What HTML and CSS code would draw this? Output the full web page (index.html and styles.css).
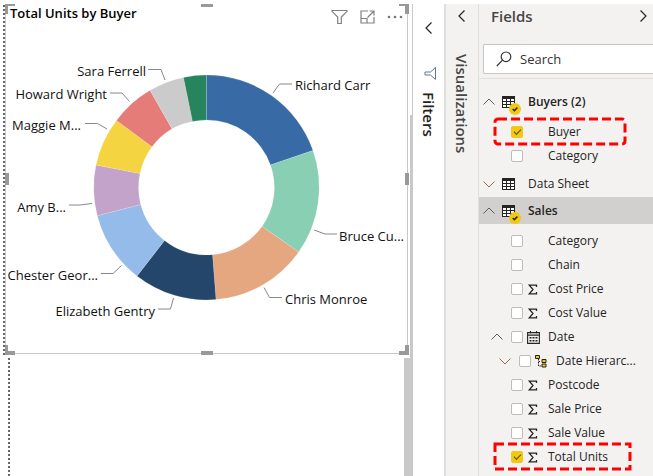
FILE: index.html
```html
<!DOCTYPE html>
<html lang="en">
<head>
<meta charset="utf-8">
<title>Total Units by Buyer</title>
<link rel="stylesheet" href="styles.css">
</head>
<body>
<svg class="defs" aria-hidden="true">
  <symbol id="up" viewBox="0 0 12 12"><path d="M.5 8.500 6 3l5.500 5.500" fill="none" stroke="currentColor"/></symbol>
  <symbol id="down" viewBox="0 0 12 12"><path d="M.5 3.500 6 9l5.500-5.500" fill="none" stroke="currentColor"/></symbol>
  <symbol id="left" viewBox="0 0 12 12"><path d="M8.500.5 3 6l5.500 5.500" fill="none" stroke="currentColor" stroke-width="1.200"/></symbol>
  <symbol id="right" viewBox="0 0 12 12"><path d="M3.500.5 9 6l-5.500 5.500" fill="none" stroke="currentColor" stroke-width="1.200"/></symbol>
  <symbol id="table" viewBox="0 0 20 27"><path d="M0 8h13v12H0z" fill="#252423"/><path d="M1 11h3v2H1zm4 0h3v2H5zm4 0h3v2H9zM1 14h3v2H1zm4 0h3v2H5zm4 0h3v2H9zM1 17h3v2H1zm4 0h3v2H5zm4 0h3v2H9z" fill="#fff"/></symbol>
  <symbol id="badge" viewBox="0 0 20 27"><circle cx="13" cy="21" r="6" fill="#f2c811"/><path d="m10.700 21 1.700 1.700 3-3.200" fill="none" stroke="#252423" stroke-width="1.600"/></symbol>
  <symbol id="sigma" viewBox="0 0 13 13"><path d="M9.500 4V2.200H2.300L6 6.500l-3.700 4.300h7.200V9" fill="none" stroke="#252423" stroke-width="1.300"/></symbol>
  <symbol id="calendar" viewBox="0 0 13 13"><path d="M.6 1.600h11.800v10.800H.6zM.6 4.100h11.800M3.500 0v2.500M9.500 0v2.500" fill="none" stroke="#252423" stroke-width="1.100"/><path d="M5.500 6h2v1.500h-2zm3 0h2v1.500h-2zm-6 3h2v1.500h-2zm3 0h2v1.500h-2zm3 0h2v1.500h-2zm-6-3h2v1.500h-2z" fill="#252423"/></symbol>
  <symbol id="hierarchy" viewBox="0 0 13 13"><path d="M3.500 4v2.500H6M3.500 7v4H6" fill="none" stroke="#252423" stroke-dasharray="1.500 1"/><path d="M.5.500h4v3h-4zM7 4.500h4v3H7zm0 4.500h4v3H7z" fill="#f2c811" stroke="#252423"/></symbol>
</svg>
<div class="app">
  <main class="canvas">
    <figure class="visual">
      <header class="visual-head">
        <h1>Total Units by Buyer</h1>
        <button aria-label="Filters on visual"><svg width="17" height="16" viewBox="0 0 17 16" fill="none" stroke="#808080" stroke-width="1.200"><path d="M1 1.500h15v.8L10.300 8v6.500H6.700V8L1 2.300z"/></svg></button>
        <button aria-label="Focus mode"><svg width="15" height="14" viewBox="0 0 15 14" fill="none" stroke="#808080" stroke-width="1.200"><path d="M8 1H1v12h13V7M1 8.500h6V13M7.500 7.500l6-6M9.500 1H14v4.500"/></svg></button>
        <button aria-label="More options"><svg width="16" height="4" viewBox="0 0 16 4" fill="#777"><circle cx="2" cy="2" r="1.300"/><circle cx="8" cy="2" r="1.300"/><circle cx="14" cy="2" r="1.300"/></svg></button>
      </header>
      <svg class="donut" viewBox="6 28 401 325" role="img" aria-label="Donut chart of total units by buyer">
        <g stroke="#fff" stroke-opacity=".3" stroke-width=".5">
          <path fill="#386ba6" d="M206.500 75A112.500 112.500 0 0 1 313 150.500L270.500 165A67.500 67.500 0 0 0 206.500 120Z"/>
          <path fill="#88cfb4" d="M313 150.500A112.500 112.500 0 0 1 298.700 252L262 226.500A67.500 67.500 0 0 0 270.500 165Z"/>
          <path fill="#e5a780" d="M298.700 252A112.500 112.500 0 0 1 216 299.600L212.500 254.700A67.500 67.500 0 0 0 262 226.500Z"/>
          <path fill="#25466b" d="M216 299.600A112.500 112.500 0 0 1 137 276L164.500 240.500A67.500 67.500 0 0 0 212.500 254.700Z"/>
          <path fill="#94bbe9" d="M137 276A112.500 112.500 0 0 1 97.300 215.700L140.700 204.500A67.500 67.500 0 0 0 164.500 240.500Z"/>
          <path fill="#c3a3c9" d="M97.300 215.700A112.500 112.500 0 0 1 96 165L140 173.500A67.500 67.500 0 0 0 140.700 204.500Z"/>
          <path fill="#f4d440" d="M96 165A112.500 112.500 0 0 1 116.500 120.500L152 146.800A67.500 67.500 0 0 0 140 173.500Z"/>
          <path fill="#e57c78" d="M116.500 120.500A112.500 112.500 0 0 1 150 90.300L172 128.700A67.500 67.500 0 0 0 152 146.800Z"/>
          <path fill="#cbcbcb" d="M150 90.300A112.500 112.500 0 0 1 183.500 77.400L192.500 121.500A67.500 67.500 0 0 0 172 128.700Z"/>
          <path fill="#26855f" d="M183.500 77.400A112.500 112.500 0 0 1 206.500 75V120A67.500 67.500 0 0 0 192.500 121.500Z"/>
        </g>
        <path class="leaders" d="M273 93l6.500-9H292M314 230l11 4h12M264 287.500l5.500 10H282M173.500 298l-3 11H158M121.500 265.500l-8.500 8h-12M92 203.500l-12 1.500H69M107 129l-9.500-5.500H85M129.500 101.500l-7.500-8.500h-12M165 80l-4-10.500h-13"/>
        <g class="names">
          <text x="295" y="90">Richard Carr</text>
          <text x="339" y="241">Bruce Cu...</text>
          <text x="285" y="304">Chris Monroe</text>
          <text x="155" y="316" text-anchor="end">Elizabeth Gentry</text>
          <text x="98" y="280" text-anchor="end">Chester Geor...</text>
          <text x="66" y="212" text-anchor="end">Amy B...</text>
          <text x="81" y="130" text-anchor="end">Maggie M...</text>
          <text x="107" y="99" text-anchor="end">Howard Wright</text>
          <text x="146" y="76" text-anchor="end">Sara Ferrell</text>
        </g>
      </svg>
      <i class="handle corner tl"></i><i class="handle top"></i><i class="handle corner tr"></i>
      <i class="handle west"></i><i class="handle east"></i>
      <i class="handle corner bl"></i><i class="handle bottom"></i><i class="handle corner br"></i>
    </figure>
    <div class="below"></div>
    <div class="scroll"></div>
  </main>
  <aside class="rail filters">
    <button aria-label="Expand filters"><svg width="12" height="12"><use href="#left"/></svg></button>
    <svg class="funnel" width="13" height="13" viewBox="0 0 13 13" fill="none" stroke="#5f7490"><path d="M11.500.5v12L6.500 8H1V5h5.500z"/></svg>
    <h2>Filters</h2>
  </aside>
  <aside class="rail visuals">
    <button aria-label="Expand visualizations"><svg width="12" height="12"><use href="#left"/></svg></button>
    <h2>Visualizations</h2>
  </aside>
  <aside class="fields">
    <header class="fields-head"><h2>Fields</h2><button aria-label="Collapse fields"><svg width="12" height="12"><use href="#right"/></svg></button></header>
    <label class="search">
      <svg width="16" height="16" viewBox="0 0 16 16" fill="none" stroke="#333" stroke-width="1.200"><circle cx="10" cy="5.800" r="4.800"/><path d="M6.500 9.200.8 15"/></svg>
      <input type="text" placeholder="Search" aria-label="Search">
    </label>
    <div class="tree">
      <button class="group bold"><svg class="chev" width="12" height="12"><use href="#up"/></svg><svg width="20" height="27"><use href="#table"/><use href="#badge"/></svg>Buyers (2)</button>
      <div class="items">
        <label class="field"><input type="checkbox" checked><span class="icon"></span>Buyer<svg class="mark buyer"><rect x="2" y="2" rx="3"/></svg></label>
        <label class="field"><input type="checkbox"><span class="icon"></span>Category</label>
      </div>
      <button class="group"><svg class="chev warm" width="12" height="12"><use href="#down"/></svg><svg width="20" height="27"><use href="#table"/></svg>Data Sheet</button>
      <button class="group bold selected"><svg class="chev" width="12" height="12"><use href="#up"/></svg><svg width="20" height="27"><use href="#table"/><use href="#badge"/></svg>Sales</button>
      <div class="items">
        <label class="field"><input type="checkbox"><span class="icon"></span>Category</label>
        <label class="field"><input type="checkbox"><span class="icon"></span>Chain</label>
        <label class="field"><input type="checkbox"><svg class="icon"><use href="#sigma"/></svg>Cost Price</label>
        <label class="field"><input type="checkbox"><svg class="icon"><use href="#sigma"/></svg>Cost Value</label>
        <label class="field open"><svg class="chev" width="12" height="12"><use href="#up"/></svg><input type="checkbox"><svg class="icon"><use href="#calendar"/></svg>Date</label>
        <label class="field nested"><svg class="chev warm" width="12" height="12"><use href="#down"/></svg><input type="checkbox"><svg class="icon"><use href="#hierarchy"/></svg>Date Hierarc...</label>
        <label class="field"><input type="checkbox"><svg class="icon"><use href="#sigma"/></svg>Postcode</label>
        <label class="field"><input type="checkbox"><svg class="icon"><use href="#sigma"/></svg>Sale Price</label>
        <label class="field"><input type="checkbox"><svg class="icon"><use href="#sigma"/></svg>Sale Value</label>
        <label class="field"><input type="checkbox" checked><svg class="icon"><use href="#sigma"/></svg>Total Units<svg class="mark total"><rect x="2" y="2"/></svg></label>
      </div>
    </div>
  </aside>
</div>
</body>
</html>
```
FILE: styles.css
```css
* { box-sizing: border-box; }
body { margin: 0; background: #fff; color: #252423; font-family: "Open Sans", "Noto Sans", sans-serif; font-size: 12px; line-height: 16px; overflow: hidden; }
h1, h2, figure { margin: 0; }
button { display: flex; align-items: center; padding: 0; border: 0; background: none; color: inherit; font: inherit; }
svg { flex: none; }
.defs { position: absolute; width: 0; height: 0; }
.app { display: grid; grid-template-columns: minmax(0, 1fr) 31px 34px 175px; min-height: 100vh; padding-top: 4px; }

.canvas { position: relative; display: flex; flex-direction: column; padding: 0 4px 0 3px; border-right: 1px solid #c8c8c8; }
.visual { position: relative; margin-left: 2px; border: 1px solid #c8c8c8; border-top: 0; }
.visual::before { content: ""; position: absolute; left: -3px; top: 1px; bottom: -4px; width: 2px; background: repeating-linear-gradient(#666 0 2px, transparent 2px 4px); }
.visual-head { display: flex; align-items: center; gap: 12px; height: 24px; padding: 2px 4px 0 4px; }
.visual-head h1 { flex: 1; padding-bottom: 8px; color: #000; font-size: 13px; font-weight: 600; line-height: 16px; }
.donut { display: block; width: 100%; }
.names { fill: #111; font-size: 13px; }
.leaders { fill: none; stroke: #888; }
.below { flex: 1; width: 2px; margin: 4px 0 0 5px; background: repeating-linear-gradient(#666 0 2px, transparent 2px 4px); }
.scroll { position: absolute; top: 111px; right: -1px; bottom: 0; width: 3px; background: #c8c8c8; }
.scroll::after { content: ""; position: absolute; top: 243px; right: 0; bottom: 0; width: 9px; background: #c8c8c8; }

.handle { position: absolute; width: 12px; height: 4px; background: #999; }
.top { left: 195px; top: 0; height: 3px; }
.bottom { left: 195px; bottom: -2px; }
.west, .east { top: 169px; width: 4px; height: 12px; }
.west { left: -1px; }
.east { right: -2px; }
.corner { width: 10px; height: 10px; border: 0 solid #999; background: none; }
.tl { left: -1px; top: 0; border-width: 2px 0 0 3px; }
.tr { right: -2px; top: 0; border-width: 2px 4px 0 0; }
.bl { left: -1px; bottom: -2px; border-width: 0 0 4px 3px; }
.br { right: -2px; bottom: -2px; border-width: 0 4px 4px 0; }

.rail { display: flex; flex-direction: column; align-items: center; }
.rail h2 { writing-mode: vertical-rl; color: #252423; font-size: 15px; font-weight: 600; line-height: 20px; }
.filters { padding-top: 18px; }
.funnel { margin: 33px 0 12px 4px; }
.visuals { padding-top: 6px; background: #f3f2f1; border-left: 2px solid #e1dfdd; }
.visuals h2 { margin-top: 32px; color: #484644; }

.fields { background: #f3f2f1; border-left: 1px solid #e1dfdd; }
.fields-head { display: flex; justify-content: space-between; align-items: center; height: 24px; padding: 0 4px 0 12px; }
.fields-head h2 { color: #484644; font-size: 15px; font-weight: 600; line-height: 24px; }
.search { display: flex; align-items: center; gap: 8px; height: 30px; margin: 16px 0 4px 4px; padding-left: 12px; background: #fff; border: 1px solid #c8c6c4; border-right: 0; border-radius: 2px 0 0 2px; }
.search input { width: 100%; min-width: 0; padding: 0; border: 0; outline: 0; background: none; color: inherit; font: inherit; font-size: 13px; }
.search input::placeholder { color: #333; opacity: 1; }
.tree { padding-top: 9px; border-top: 1px solid #e1dfdd; }
.group { gap: 6px; width: 100%; height: 27px; padding-left: 4px; font-size: 12px; }
.group .chev { margin-right: 1px; }
.bold { font-weight: 600; }
.selected { background: #d2d0ce; }
.chev { color: #605e5c; }
.warm { color: #a0684c; }
.items { padding: 5px 0 2px; }
.field { position: relative; display: flex; align-items: center; height: 24px; padding-left: 32px; }
.field input { appearance: none; flex: none; display: grid; place-items: center; width: 12px; height: 12px; margin: 0 4px 0 0; border: 1px solid #bebbb8; border-radius: 2px; background: #fff; }
.field input:checked { border-color: #f2c811; background: #f2c811; }
.field input:checked::before { content: ""; width: 6px; height: 3px; margin-bottom: 2px; border: solid #574a12; border-width: 0 0 1px 1px; transform: rotate(-45deg); }
.icon { flex: none; width: 13px; height: 13px; margin-right: 8px; }
.open { padding-left: 12px; }
.open .chev, .nested .chev { margin-right: 8px; }
.nested { padding-left: 20px; }
.mark { position: absolute; left: 14px; top: -3px; height: 29px; pointer-events: none; }
.mark rect { width: calc(100% - 4px); height: 25px; fill: none; stroke: #f00; stroke-width: 3px; stroke-dasharray: 9px 4px; }
.buyer { width: 134px; }
.total { width: 139px; }
```
